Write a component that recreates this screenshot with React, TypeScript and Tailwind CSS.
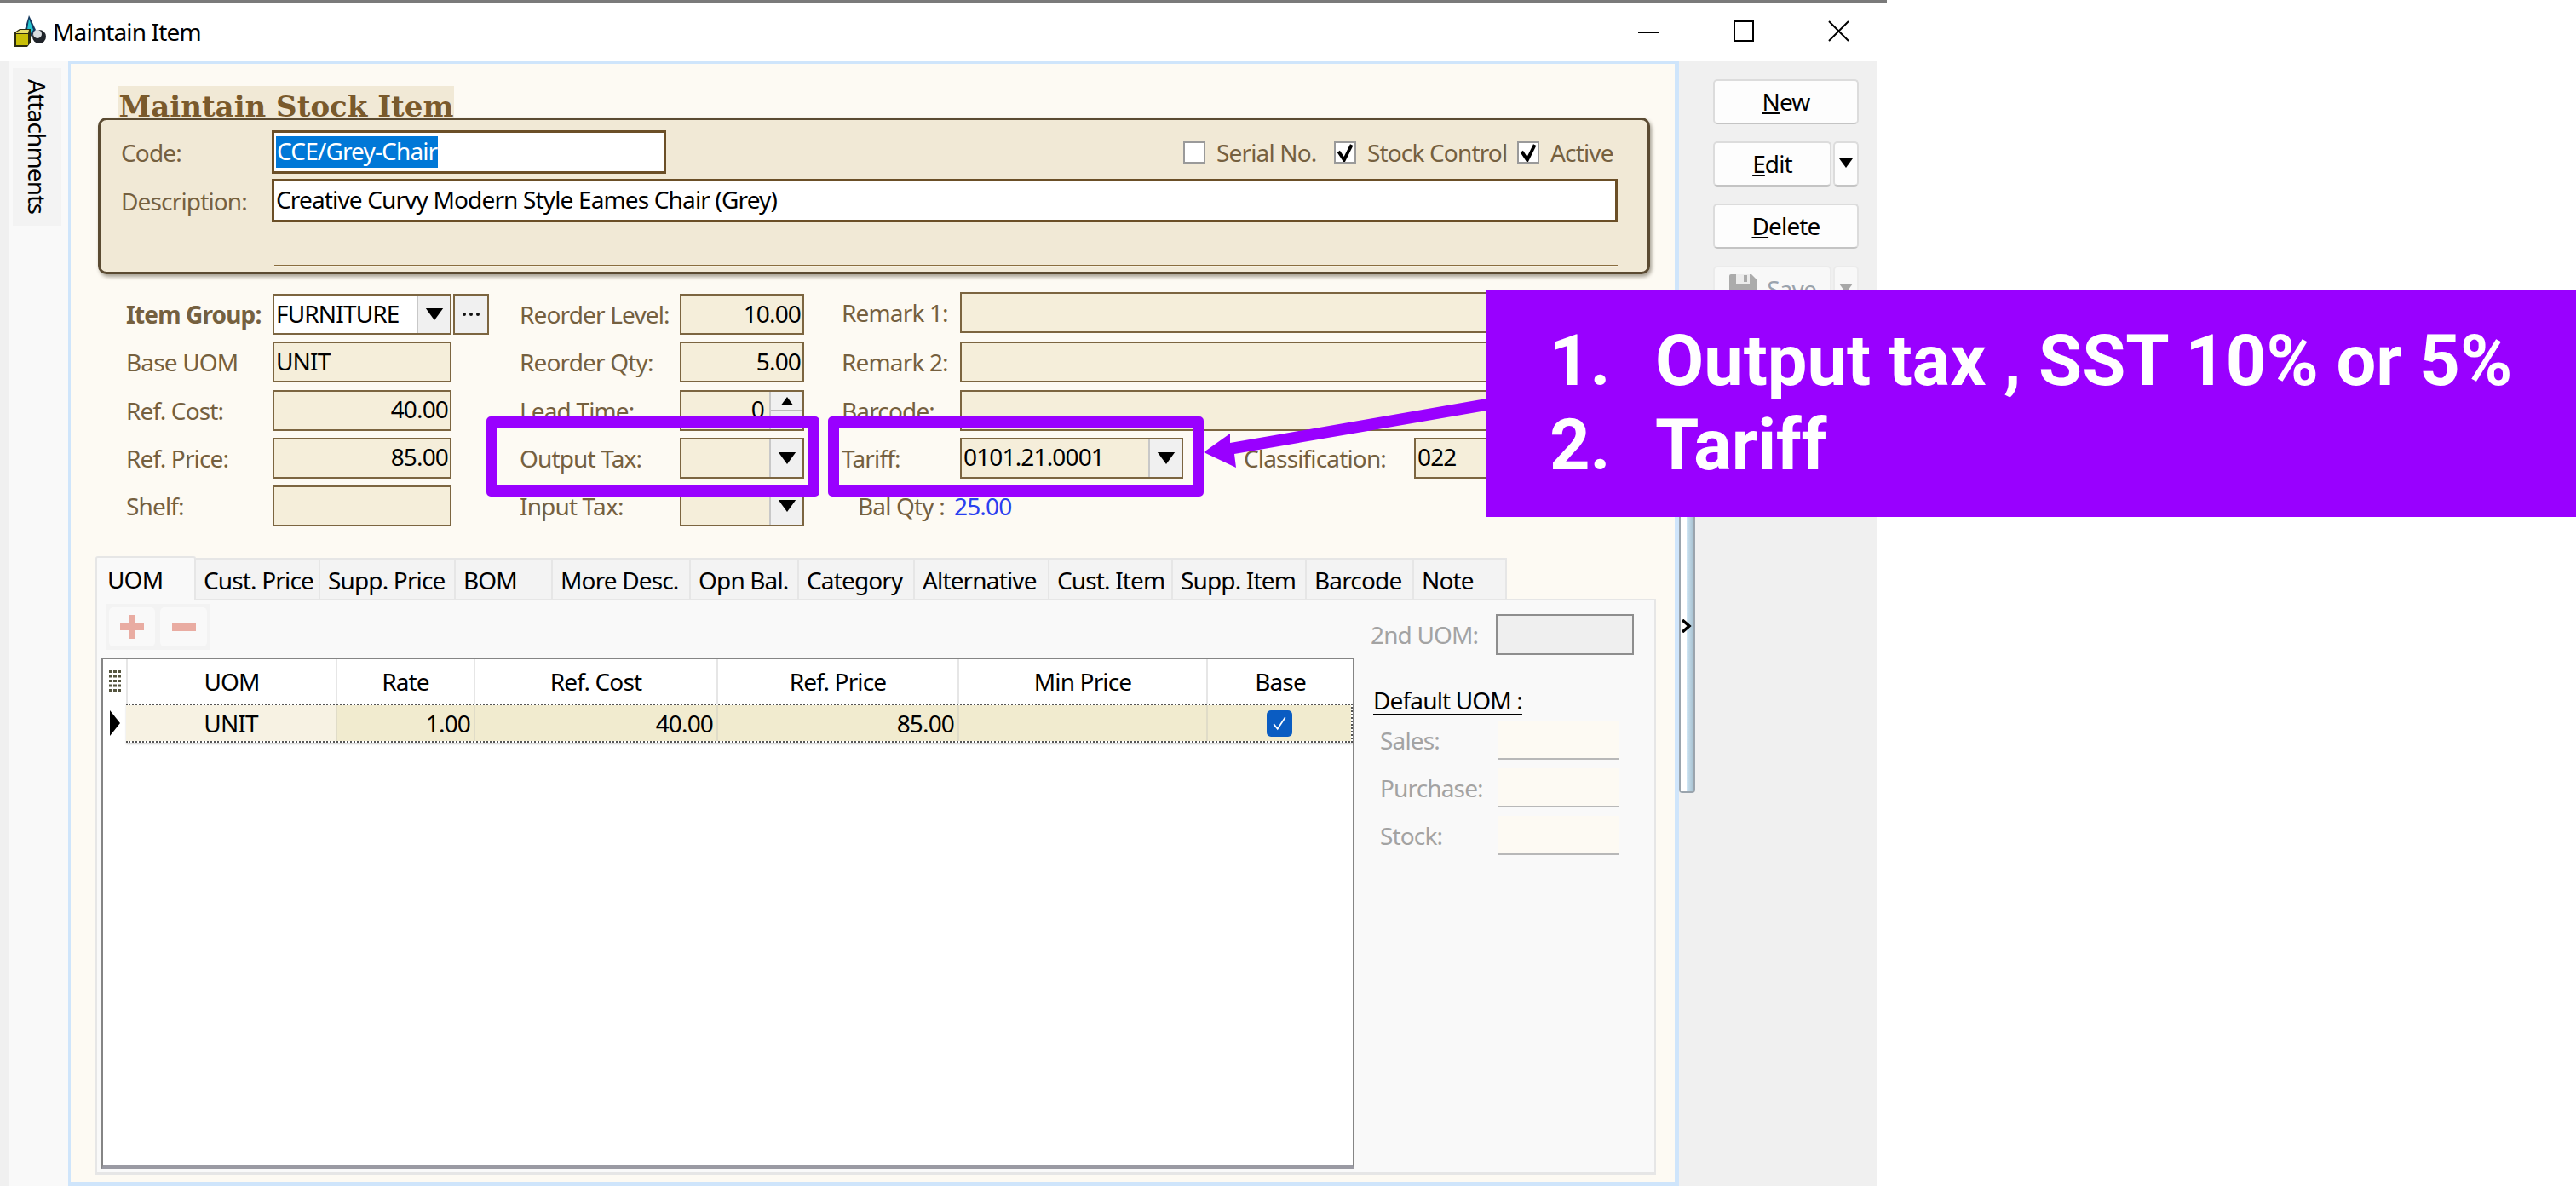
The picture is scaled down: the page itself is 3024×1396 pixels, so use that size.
import React from "react";

const Label = ({ children, className = "" }: { children: React.ReactNode; className?: string }) => (
  <span className={`text-[#75603f] whitespace-nowrap ${className}`}>{children}</span>
);

const Field = ({ children, right, className = "w-[210px]" }: { children?: React.ReactNode; right?: boolean; className?: string }) => (
  <div className={`h-[48px] shrink-0 border-2 border-[#7c6540] bg-[#f5eeda] flex items-center px-[2px] pb-[3px] text-black whitespace-nowrap ${right ? "justify-end" : ""} ${className}`}>
    {children}
  </div>
);

const Arrow = ({ className = "w-[16px] h-[11px]", fill = "#000" }: { className?: string; fill?: string }) => (
  <svg viewBox="0 0 16 11" className={className}><path d="M0 0H16L8 11Z" fill={fill} /></svg>
);

const DropBtn = () => (
  <div className="w-[39px] h-full shrink-0 bg-[#f0f0f0] border-l-2 border-[#c8c8c8] flex items-center justify-center">
    <Arrow className="w-[22px] h-[14px]" />
  </div>
);

const Combo = () => (
  <div className="w-[146px] h-[48px] border-2 border-[#7c6540] bg-[#f5eeda] flex items-stretch justify-end">
    <DropBtn />
  </div>
);

const Row = ({ label, children, w, bold }: { label: string; children: React.ReactNode; w: string; bold?: boolean }) => (
  <div className="flex items-center h-[48px]">
    <Label className={`${w} ${bold ? "font-bold" : ""}`}>{label}</Label>
    {children}
  </div>
);

const Check = ({ checked }: { checked?: boolean }) => (
  <div className="w-[26px] h-[26px] shrink-0 bg-white border-2 border-[#9a9a9a] flex items-center justify-center">
    {checked && (
      <svg viewBox="0 0 20 20" className="w-[22px] h-[22px]"><path d="M3 9L9 18L17 2" fill="none" stroke="#000" strokeWidth="3.5" /></svg>
    )}
  </div>
);

const SideBtn = ({ children, className = "w-[171px]" }: { children: React.ReactNode; className?: string }) => (
  <div className={`h-[53px] bg-[#fdfdfd] border-2 border-[#dcdcdc] border-b-[#c4c4c4] rounded-[5px] flex items-center justify-center pb-[2px] text-black ${className}`}>
    {children}
  </div>
);

const tabs: [string, string][] = [
  ["Cust. Price", "w-[146px]"],
  ["Supp. Price", "w-[159px]"],
  ["BOM", "w-[114px]"],
  ["More Desc.", "w-[162px]"],
  ["Opn Bal.", "w-[127px]"],
  ["Category", "w-[136px]"],
  ["Alternative", "w-[158px]"],
  ["Cust. Item", "w-[145px]"],
  ["Supp. Item", "w-[157px]"],
  ["Barcode", "w-[126px]"],
  ["Note", "w-[109px]"],
];

const cols: [string, string, string, string][] = [
  ["UOM", "w-[246px]", "UNIT", "center"],
  ["Rate", "w-[162px]", "1.00", "right"],
  ["Ref. Cost", "w-[285px]", "40.00", "right"],
  ["Ref. Price", "w-[283px]", "85.00", "right"],
  ["Min Price", "w-[292px]", "", "right"],
];

const Uom = ({ label }: { label: string }) => (
  <div className="flex items-center h-[46px]">
    <span className="w-[149px] pl-[11px] text-[#a3a3a3]">{label}</span>
    <div className="w-[143px] h-[46px] bg-[#fdfaf3] border-b-2 border-[#b8b8b8]" />
  </div>
);

export default function App() {
  return (
    <div className="relative w-[3024px] h-[1396px] bg-white overflow-hidden font-['Noto_Sans',sans-serif] text-[28px] tracking-[-0.85px]">
      <div className="w-[2215px]">
        <div className="h-[3px] bg-[#7a7a7a]" />
        {/* Title bar */}
        <div className="h-[69px] flex items-center w-[2204px] relative">
          <svg viewBox="0 0 38 38" className="ml-[17px] w-[38px] h-[38px] mb-[4px] shrink-0">
            <path d="M17 1L25 18L20 26L12 18Z" fill="#15395f" />
            <path d="M17 5L22 18L19 22L15 18Z" fill="#25c4cf" />
            <circle cx="29" cy="26" r="8" fill="#20242a" />
            <circle cx="27" cy="23" r="5" fill="#d9dde0" />
            <path d="M0 21L6 17H19V33L15 38H0Z" fill="#2c2c10" />
            <path d="M2 23H16V36H2Z" fill="#c8bf08" />
            <path d="M2 21L7 18H17L16 22H2Z" fill="#e6df6a" />
          </svg>
          <span className="ml-[7px] pb-[2px] text-black">Maintain Item</span>
          <div className="absolute left-[1923px] top-[34px] w-[25px] h-[2px] bg-black" />
          <div className="absolute left-[2035px] top-[21px] w-[24px] h-[25px] border-2 border-black" />
          <svg viewBox="0 0 25 25" className="absolute left-[2146px] top-[21px] w-[25px] h-[25px]"><path d="M1 1L24 24M24 1L1 24" stroke="#000" strokeWidth="2" /></svg>
        </div>

        {/* Body */}
        <div className="flex h-[1320px] w-[2204px] bg-[#f0f0f0]">
          {/* Left strip */}
          <div className="ml-[10px] w-[70px] bg-[#f9f9f9] pl-[5px] pt-[8px] shrink-0">
            <div className="w-[57px] h-[185px] bg-[#f3f3f3] flex items-center justify-center">
              <span className="[writing-mode:vertical-rl] text-black">Attachments</span>
            </div>
          </div>

          {/* Main panel */}
          <div className="w-[1891px] shrink-0 border-[3px] border-r-[5px] border-b-[4px] border-[#cfe5fb] bg-[#fdfaf3] pt-[26px]">
            <div className="ml-[56px] w-[394px] h-[38px] pt-[5px] bg-[#f1e9d6] text-center relative z-10 font-['DejaVu_Serif',serif] font-bold text-[34px] leading-[38px] tracking-normal whitespace-nowrap text-[#7a5a2c]">
              Maintain Stock Item
            </div>
            {/* Header group */}
            <div className="ml-[32px] w-[1822px] h-[184px] -mt-[1px] bg-[#f1e9d6] border-[3px] border-[#5b4b32] rounded-[10px] shadow-[2px_3px_4px_rgba(60,50,30,0.45)] pl-[24px] pr-[35px] pt-[12px]">
              <div className="flex items-center h-[51px]">
                <Label className="w-[177px]">Code:</Label>
                <div className="w-[463px] h-[51px] bg-white border-[3px] border-[#6b4f27] pl-[2px] flex items-center">
                  <span className="bg-[#0078d7] text-white h-[37px] leading-[35px] px-[1px]">CCE/Grey-Chair</span>
                </div>
                <div className="ml-auto flex items-center">
                  <Check />
                  <Label className="ml-[13px] w-[138px]">Serial No.</Label>
                  <Check checked />
                  <Label className="ml-[13px] w-[176px]">Stock Control</Label>
                  <Check checked />
                  <Label className="ml-[13px] w-[79px]">Active</Label>
                </div>
              </div>
              <div className="flex items-center h-[51px] mt-[6px]">
                <Label className="w-[177px]">Description:</Label>
                <div className="flex-1 h-[51px] bg-white border-[3px] border-[#6b4f27] pl-[2px] pb-[3px] flex items-center text-black">
                  Creative Curvy Modern Style Eames Chair (Grey)
                </div>
              </div>
              <div className="ml-[180px] mt-[50px] h-[3px] border-y border-[#8a6d3f] bg-[#f8f2e2]" />
            </div>

            {/* Fields */}
            <div className="flex mt-[23px] ml-[65px]">
              <div className="w-[462px] flex flex-col gap-[8.25px]">
                <Row label="Item Group:" w="w-[172px]" bold>
                  <div className="w-[210px] h-[48px] border-2 border-[#7c6540] bg-white flex items-stretch justify-between text-black">
                    <span className="pl-[2px] self-center pb-[3px]">FURNITURE</span>
                    <DropBtn />
                  </div>
                  <div className="ml-[2px] w-[42px] h-[48px] bg-[#f0f0f0] border-2 border-[#7c6540] flex items-center justify-center">
                    <svg viewBox="0 0 20 4" className="w-[20px] h-[4px]">
                      <circle cx="2" cy="2" r="2" fill="#111" /><circle cx="10" cy="2" r="2" fill="#111" /><circle cx="18" cy="2" r="2" fill="#111" />
                    </svg>
                  </div>
                </Row>
                <Row label="Base UOM" w="w-[172px]"><Field>UNIT</Field></Row>
                <Row label="Ref. Cost:" w="w-[172px]"><Field right>40.00</Field></Row>
                <Row label="Ref. Price:" w="w-[172px]"><Field right>85.00</Field></Row>
                <Row label="Shelf:" w="w-[172px]"><Field /></Row>
              </div>
              <div className="w-[378px] flex flex-col gap-[8.25px]">
                <Row label="Reorder Level:" w="w-[188px]"><Field right className="w-[146px]">10.00</Field></Row>
                <Row label="Reorder Qty:" w="w-[188px]"><Field right className="w-[146px]">5.00</Field></Row>
                <Row label="Lead Time:" w="w-[188px]">
                  <div className="w-[146px] h-[48px] border-2 border-[#7c6540] bg-[#f5eeda] flex items-stretch justify-end">
                    <span className="self-center pr-[6px] pb-[3px] text-black">0</span>
                    <div className="w-[39px] bg-[#f0f0f0] flex flex-col items-center border-l-2 border-[#c8c8c8]">
                      <div className="h-[22px] w-full flex items-center justify-center border-b border-[#bbb]"><Arrow className="w-[14px] h-[9px] rotate-180" /></div>
                    </div>
                  </div>
                </Row>
                <Row label="Output Tax:" w="w-[188px]"><Combo /></Row>
                <Row label="Input Tax:" w="w-[188px]"><Combo /></Row>
              </div>
              <div className="flex flex-col gap-[8.25px] -mt-[2px]">
                <div className="flex items-start h-[50px]"><Label className="w-[139px] leading-[48px]">Remark 1:</Label><Field className="w-[772px]" /></div>
                <Row label="Remark 2:" w="w-[139px]"><Field className="w-[772px]" /></Row>
                <Row label="Barcode:" w="w-[139px]"><Field className="w-[772px]" /></Row>
                <Row label="Tariff:" w="w-[139px]">
                  <div className="w-[262px] h-[48px] border-2 border-[#7c6540] bg-[#f5eeda] flex items-stretch justify-between text-black">
                    <span className="pl-[2px] self-center pb-[3px]">0101.21.0001</span>
                    <DropBtn />
                  </div>
                  <Label className="ml-[71px] w-[200px]">Classification:</Label>
                  <Field className="w-[239px]">022</Field>
                </Row>
                <div className="flex items-center h-[48px] pl-[19px]">
                  <Label className="w-[113px]">Bal Qty :</Label>
                  <span className="text-[#2a3ff0]">25.00</span>
                </div>
              </div>
            </div>

            {/* Tabs */}
            <div className="ml-[29px] mt-[34px] w-[1832px] flex flex-col">
              <div className="flex h-[51px] items-end text-black">
                <div className="w-[118px] h-[51px] bg-[#f9f9f9] border-x-2 border-t-2 border-[#e6e6e6] rounded-t-[3px] pl-[12px] flex items-center -mb-[1px] relative z-10">UOM</div>
                {tabs.map(([t, w]) => (
                  <div key={t} className={`${w} h-[48px] bg-[#f3f3f3] border-r-2 border-t-2 border-[#e6e6e6] pl-[9px] pt-[2px] flex items-center whitespace-nowrap`}>{t}</div>
                ))}
              </div>
              <div className="h-[677px] bg-[#f9f9f9] border-2 border-[#e6e6e6] border-b-[4px] flex pl-[5px]">
                <div className="w-[1471px] shrink-0">
                  <div className="mt-[4px] ml-[5px] w-[123px] h-[54px] bg-[#f3f3f3] flex items-center gap-[6px] px-[4px]">
                    <div className="w-[55px] h-[46px] bg-[#f9f9f9] rounded-[5px] flex items-center justify-center">
                      <svg viewBox="0 0 28 28" className="w-[28px] h-[28px]"><path d="M10 0H18V10H28V18H18V28H10V18H0V10H10Z" fill="#e9aca2" /></svg>
                    </div>
                    <div className="w-[56px] h-[46px] bg-[#f9f9f9] rounded-[5px] flex items-center justify-center">
                      <div className="w-[28px] h-[9px] bg-[#e9aca2]" />
                    </div>
                  </div>
                  <div className="mt-[9px] h-[601px] bg-white border-2 border-[#858585] border-b-[5px] border-b-[#9a9aa3] text-black">
                    <div className="flex h-[52px] items-stretch">
                      <div className="w-[27px] shrink-0 flex items-center justify-center">
                        <svg viewBox="0 0 14 26" className="w-[14px] h-[26px]">
                          {[0, 5.5, 11, 16.5, 22].map((y) => (
                            <g key={y} fill="#55553f"><rect x="0" y={y} width="3" height="3" /><rect x="5" y={y} width="4" height="3" /><rect x="11" y={y} width="3" height="3" /></g>
                          ))}
                        </svg>
                      </div>
                      {cols.map(([h, w]) => (
                        <div key={h} className={`${w} shrink-0 border-l-2 border-[#e6e6e6] flex items-center justify-center`}>{h}</div>
                      ))}
                      <div className="flex-1 border-l-2 border-[#e6e6e6] flex items-center justify-center">Base</div>
                    </div>
                    <div className="flex h-[46px] items-stretch">
                      <div className="w-[27px] shrink-0 flex items-center justify-center">
                        <svg viewBox="0 0 12 30" className="w-[12px] h-[30px]"><path d="M0 0L12 15L0 30Z" fill="#000" /></svg>
                      </div>
                      <div className="flex-1 flex border-2 border-dotted border-[#555] shadow-[0_2px_2px_rgba(0,0,0,0.15)]">
                        {cols.map(([h, w, v, a], i) => (
                          <div key={h} className={`${w} shrink-0 ${i === 0 ? "bg-[#f7f2e3] -ml-[2px]" : "bg-[#f1ebcf] border-l-2 border-[#e0dcc8]"} flex items-center px-[4px] ${a === "center" ? "justify-center" : "justify-end"}`}>{v}</div>
                        ))}
                        <div className="flex-1 bg-[#f1ebcf] border-l-2 border-[#e0dcc8] flex items-center justify-center">
                          <div className="w-[30px] h-[31px] bg-[#0a5cc2] rounded-[5px] flex items-center justify-center">
                            <svg viewBox="0 0 16 16" className="w-[18px] h-[18px]"><path d="M2 9L6 14L14 2" fill="none" stroke="#fff" strokeWidth="1.5" /></svg>
                          </div>
                        </div>
                      </div>
                    </div>
                  </div>
                </div>
                {/* Right side */}
                <div className="pl-[19px] pt-[16px]">
                  <div className="flex items-center h-[48px]">
                    <span className="w-[147px] text-[#a3a3a3]">2nd UOM:</span>
                    <div className="w-[162px] h-[48px] bg-[#efefef] border-2 border-[#8e8e8e]" />
                  </div>
                  <div className="mt-[32px] pl-[3px] text-black underline decoration-2 underline-offset-[5px]">Default UOM :</div>
                  <div className="mt-[3px] flex flex-col gap-[10px]">
                    <Uom label="Sales:" />
                    <Uom label="Purchase:" />
                    <Uom label="Stock:" />
                  </div>
                </div>
              </div>
            </div>
          </div>

          {/* Splitter */}
          <div className="w-[19px] shrink-0 pt-[400px]">
            <div className="relative h-[459px] flex bg-white border-l-2 border-r-2 border-b-2 border-[#9aa4ad] rounded-b-[4px]">
              <div className="w-[7px] bg-white" />
              <div className="w-[8px] bg-gradient-to-r from-[#cfe6f5] to-[#a5bfce]" />
              <svg viewBox="0 0 13 16" className="absolute left-0 top-[255px] w-[13px] h-[16px]"><path d="M2 1L10 8L2 15" fill="none" stroke="#000" strokeWidth="3.5" /></svg>
            </div>
          </div>

          {/* Right column */}
          <div className="pl-[21px] pt-[21px] flex flex-col gap-[20px]">
            <SideBtn><span><u>N</u>ew</span></SideBtn>
            <div className="flex gap-[2px]">
              <SideBtn className="w-[139px]"><span><u>E</u>dit</span></SideBtn>
              <SideBtn className="w-[30px]"><Arrow className="w-[16px] h-[11px]" /></SideBtn>
            </div>
            <SideBtn><span><u>D</u>elete</span></SideBtn>
            <div className="flex gap-[2px]">
              <div className="w-[139px] h-[53px] bg-[#f8f8f8] border-2 border-[#ebebeb] rounded-[5px] flex items-center justify-center gap-[10px] text-[#9aa3ad]">
                <svg viewBox="0 0 35 35" className="w-[35px] h-[35px]"><path d="M1 3a2 2 0 0 1 2-2H27L34 8V32a2 2 0 0 1-2 2H3a2 2 0 0 1-2-2Z" fill="#ababab" /><rect x="9" y="1" width="16" height="11" fill="#ececec" /><rect x="18" y="2" width="4" height="8" fill="#ababab" /><rect x="7" y="19" width="21" height="15" fill="#ececec" /></svg>
                <span>Save</span>
              </div>
              <div className="w-[30px] h-[53px] bg-[#f8f8f8] border-2 border-[#ebebeb] rounded-[5px] flex items-center justify-center">
                <Arrow fill="#a8a8a8" />
              </div>
            </div>
          </div>
        </div>
      </div>

      {/* Annotation highlights */}
      <div className="absolute left-[571px] top-[489px] w-[391px] h-[94px] border-x-[13px] border-y-[14px] border-[#9900ff] rounded-[5px]" />
      <div className="absolute left-[972px] top-[489px] w-[441px] h-[94px] border-x-[13px] border-y-[14px] border-[#9900ff] rounded-[5px]" />
      <svg viewBox="0 0 3024 1396" className="absolute left-0 top-0 w-[3024px] h-[1396px] pointer-events-none">
        <path d="M1745 468L1444 520L1444 509L1413 531L1451 549L1449 533L1745 482Z" fill="#9900ff" />
      </svg>
      <div className="absolute left-[1744px] top-[340px] w-[1280px] h-[267px] bg-[#9900ff] text-white font-['Roboto',sans-serif] font-bold text-[83px] leading-[99px] tracking-normal pl-[75px] pt-[34px] whitespace-nowrap">
        <div className="flex"><span className="w-[124px]">1.</span><span>Output tax , SST 10% or 5%</span></div>
        <div className="flex"><span className="w-[124px]">2.</span><span>Tariff</span></div>
      </div>
    </div>
  );
}
